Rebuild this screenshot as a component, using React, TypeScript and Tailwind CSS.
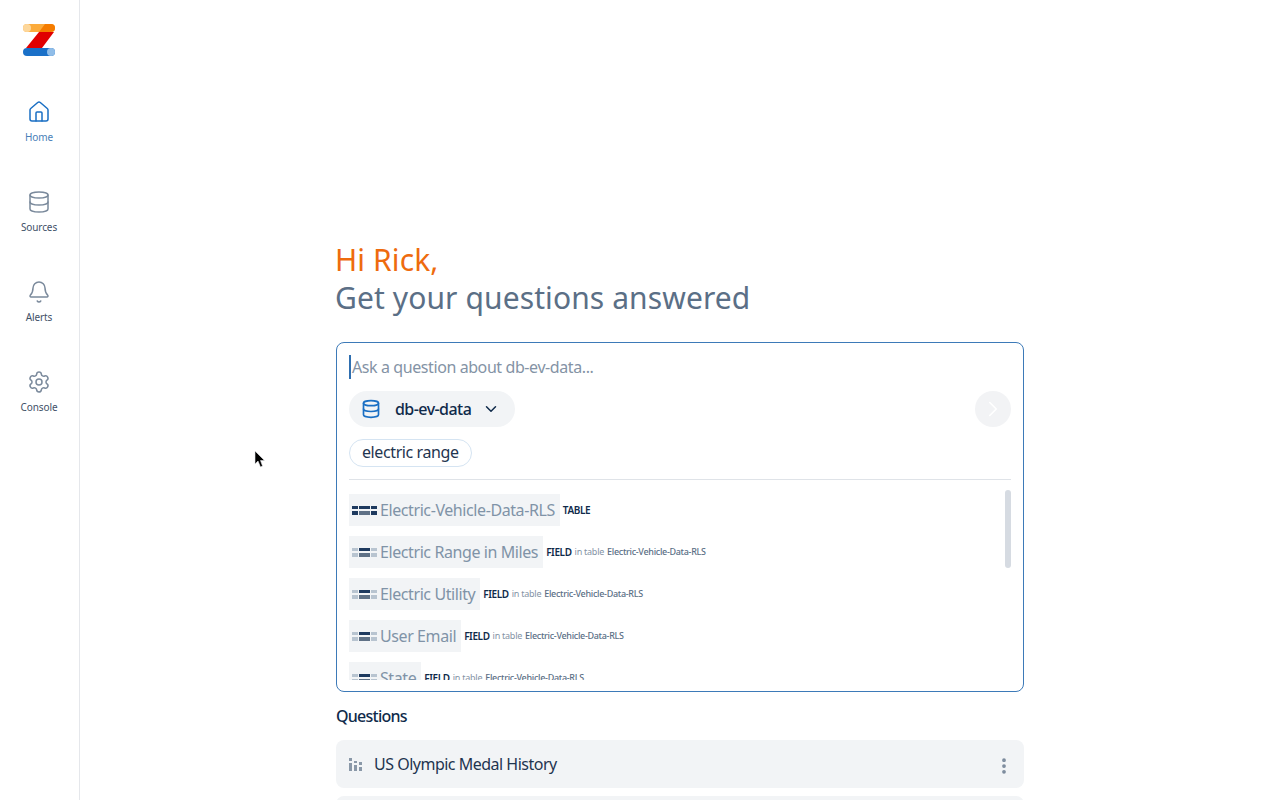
import { Home, Database, Bell, Settings, ChevronDown, ChevronRight, EllipsisVertical } from 'lucide-react';

const NAV_ITEMS = [
  { label: 'Home', icon: Home, active: true },
  { label: 'Sources', icon: Database, active: false },
  { label: 'Alerts', icon: Bell, active: false },
  { label: 'Console', icon: Settings, active: false },
];

const RESULTS = [
  { name: 'Electric-Vehicle-Data-RLS', kind: 'TABLE', table: false },
  { name: 'Electric Range in Miles', kind: 'FIELD', table: true },
  { name: 'Electric Utility', kind: 'FIELD', table: true },
  { name: 'User Email', kind: 'FIELD', table: true },
  { name: 'State', kind: 'FIELD', table: true },
];

function Logo() {
  return (
    <svg width="32" height="32" viewBox="0 0 32 32">
      <rect x="0" y="0" width="32" height="8" rx="4" fill="#fcab3b" />
      <circle cx="4" cy="4" r="4" fill="#fdd79b" />
      <path d="M22 0 L28 0 A4 4 0 0 1 28 8 L16 8 Z" fill="#f57c00" />
      <rect x="0" y="24" width="32" height="8" rx="4" fill="#1a70c8" />
      <circle cx="28" cy="28" r="4" fill="#90bde8" />
      <path d="M16 8 L31 8 L19 24 L3 24 Z" fill="#e00000" />
    </svg>
  );
}

function TableGlyph({ table }: { table: boolean }) {
  const side = table ? 'bg-[#1e3a5f]' : 'bg-[#b8c4d0]';
  return (
    <div className="grid grid-cols-[6px_11px_6px] gap-x-[1px] gap-y-[2px] w-[25px] shrink-0">
      <span className={`h-[3px] ${side}`} />
      <span className="h-[3px] bg-[#1e3a5f]" />
      <span className={`h-[3px] ${side}`} />
      <span className={`h-[4px] ${side}`} />
      <span className="h-[4px] bg-[#5f7186]" />
      <span className={`h-[4px] ${side}`} />
    </div>
  );
}

function Cursor() {
  return (
    <svg className="absolute left-[254px] top-[450px]" width="12" height="18" viewBox="0 0 12 18">
      <path d="M1 1 L1 14 L4 11 L6.5 17 L8.5 16 L6.5 10.5 L10.5 10.5 Z" fill="#000" stroke="#e5e7eb" strokeWidth="0.6" />
    </svg>
  );
}

export default function App() {
  return (
    <div className="relative flex h-screen overflow-hidden bg-white font-['Noto_Sans',sans-serif]">
      {/* Sidebar */}
      <nav className="w-[80px] shrink-0 border-r border-[#e5e7eb] flex flex-col items-center">
        <div className="mt-[24px] mb-[44px] ml-[-2px] shrink-0">
          <Logo />
        </div>
        <div className="flex flex-col gap-[46px] ml-[-1px]">
          {NAV_ITEMS.map((item) => (
            <div key={item.label} className="flex flex-col items-center h-[44px]">
              <item.icon
                size={24}
                strokeWidth={1.5}
                className={`shrink-0 ${item.active ? 'text-[#1a6fc4]' : 'text-[#7b8a9c]'}`}
              />
              <span className={`mt-[6px] text-[10px] leading-[14px] tracking-[-0.1px] ${item.active ? 'text-[#4a7fb8]' : 'text-[#3f5168]'}`}>
                {item.label}
              </span>
            </div>
          ))}
        </div>
      </nav>

      {/* Main */}
      <main className="pl-[256px] pt-[241px] w-[944px] shrink-0">
        <h1 className="ml-[-1px] text-[30px] leading-[38px] tracking-[0.1px] text-[#ee6b0e]">Hi Rick,</h1>
        <h2 className="ml-[-1px] text-[30px] leading-[38px] tracking-[0.1px] text-[#5b6f86]">Get your questions answered</h2>

        <div className="mt-[25px] h-[350px] rounded-lg border border-[#3d7ab8] px-[12px] pt-[12px] flex flex-col">
          <div className="flex items-center h-[24px]">
            <span className="w-[2px] h-[24px] bg-[#2f6fb0] mr-[1px]" />
            <span className="text-[16px] leading-[24px] tracking-[-0.41px] text-[#8493a5]">Ask a question about db-ev-data...</span>
          </div>

          <div className="mt-[12px] flex items-center justify-between h-[36px]">
            <div className="flex items-center h-[36px] rounded-full bg-[#f2f4f6] pl-[12px] pr-[15px]">
              <Database size={20} strokeWidth={2} className="shrink-0 text-[#1a6fc4]" />
              <span className="ml-[14px] text-[16px] tracking-[-0.55px] font-medium text-[#0f2a4a]">db-ev-data</span>
              <ChevronDown size={18} strokeWidth={2} className="ml-[11px] shrink-0 text-[#0f2a4a]" />
            </div>
            <div className="w-[36px] h-[36px] rounded-full bg-[#f2f3f5] flex items-center justify-center">
              <ChevronRight size={26} strokeWidth={1.5} className="text-white" />
            </div>
          </div>

          <div className="mt-[12px] flex">
            <span className="h-[28px] rounded-full border border-[#d5e4f2] px-[12px] text-[16px] tracking-[-0.4px] leading-[25px] text-[#1f3550]">
              electric range
            </span>
          </div>

          <div className="mt-[12px] border-t border-[#dfe3e8]" />

          <div className="relative mt-[10px] h-[190px] overflow-hidden">
            <div className="flex flex-col gap-[10px] pt-[4px]">
              {RESULTS.map((r) => (
                <div key={r.name} className="flex items-center h-[32px] shrink-0">
                  <div className="flex items-center h-[32px] bg-[#f2f4f6] pl-[3px] pr-[5px] gap-[3px]">
                    <TableGlyph table={!r.table} />
                    <span className="text-[16px] leading-[24px] tracking-[-0.41px] text-[#8093a7]">{r.name}</span>
                  </div>
                  <span className="ml-[3px] text-[10px] tracking-[-0.4px] font-semibold text-[#0f2a4a]">{r.kind}</span>
                  {r.table && (
                    <>
                      <span className="ml-[3px] text-[9px] tracking-[-0.25px] text-[#8493a5]">in table</span>
                      <span className="ml-[3px] text-[9px] tracking-[-0.3px] font-medium text-[#5b6f86]">Electric-Vehicle-Data-RLS</span>
                    </>
                  )}
                </div>
              ))}
            </div>
            <div className="absolute right-0 top-0 w-[6px] h-[78px] rounded-full bg-[#d6dbe2]" />
          </div>
        </div>

        <h3 className="mt-[12px] text-[16px] leading-[24px] tracking-[-0.75px] font-medium text-[#0f2a4a]">Questions</h3>

        <div className="mt-[12px] h-[48px] rounded-lg bg-[#f2f4f6] flex items-center pl-[12px] pr-[10px]">
          <svg width="16" height="14" viewBox="0 0 16 14" className="mr-[10px] mt-[2px]">
            <rect x="1" y="0" width="3" height="3" fill="#8a98a8" />
            <rect x="1" y="5" width="3" height="8" fill="#8a98a8" />
            <rect x="6" y="3" width="3" height="2" fill="#8a98a8" />
            <rect x="6" y="7" width="3" height="6" fill="#8a98a8" />
            <rect x="11" y="4" width="3" height="3" fill="#8a98a8" />
            <rect x="11" y="9" width="3" height="4" fill="#8a98a8" />
          </svg>
          <span className="text-[16px] tracking-[-0.5px] text-[#1f3550]">US Olympic Medal History</span>
          <EllipsisVertical size={20} strokeWidth={2.5} className="ml-auto mt-[3px] text-[#7b8a9c]" />
        </div>

        <div className="mt-[8px] h-[48px] rounded-lg bg-[#f2f4f6]" />
      </main>

      <Cursor />
    </div>
  );
}
